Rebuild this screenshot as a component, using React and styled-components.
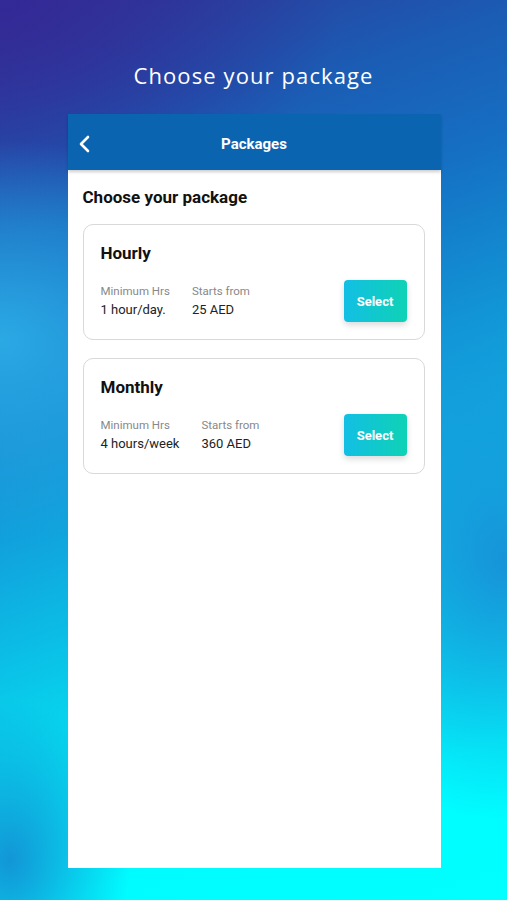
import React from "react";
import styled, {createGlobalStyle} from "styled-components";

const GlobalStyle = createGlobalStyle`
  html, body {
    margin: 0;
    padding: 0;
  }

  body {
    font-family: Roboto, "Liberation Sans", sans-serif;
  }
`;

const packages = [
    {name: "Hourly", minHours: "1 hour/day.", price: "25 AED"},
    {name: "Monthly", minHours: "4 hours/week", price: "360 AED"},
];

export default function App() {
    return <Page>
        <GlobalStyle/>
        <Caption>Choose your package</Caption>
        <Screen>
            <Header>
                <BackButton>
                    <svg width="14" height="18" viewBox="0 0 14 18">
                        <path d="M10 2 L3 9 L10 16" fill="none" stroke="#fff" strokeWidth="2.6"
                              strokeLinecap="round" strokeLinejoin="round"/>
                    </svg>
                </BackButton>
                <HeaderTitle>Packages</HeaderTitle>
            </Header>
            <Body>
                <Heading>Choose your package</Heading>
                {packages.map(item => (
                    <Card key={item.name}>
                        <CardInfo>
                            <CardTitle>{item.name}</CardTitle>
                            <Details>
                                <Detail>
                                    <Label>Minimum Hrs</Label>
                                    <Value>{item.minHours}</Value>
                                </Detail>
                                <Detail>
                                    <Label>Starts from</Label>
                                    <Value>{item.price}</Value>
                                </Detail>
                            </Details>
                        </CardInfo>
                        <SelectButton>Select</SelectButton>
                    </Card>
                ))}
            </Body>
        </Screen>
    </Page>
};

const Page = styled.div`
  width: 507px;
  height: 900px;
  overflow: hidden;
  display: flex;
  flex-direction: column;
  align-items: center;
  background:
    radial-gradient(ellipse 120px 160px at 10px 860px, rgba(20, 140, 210, 0.9), rgba(20, 140, 210, 0) 100%),
    radial-gradient(ellipse 260px 200px at 0px 340px, rgba(45, 175, 232, 0.9), rgba(45, 175, 232, 0) 100%),
    radial-gradient(ellipse 220px 260px at 507px 560px, rgba(25, 140, 215, 0.9), rgba(25, 140, 215, 0) 100%),
    radial-gradient(ellipse 340px 230px at 0px 0px, rgba(52, 40, 150, 0.95), rgba(52, 40, 150, 0) 100%),
    linear-gradient(160deg, #2f3494 0%, #1b5cb4 18%, #1570c4 30%, #10a6de 52%, #06d7ee 70%, #00fcff 85%, #00ffff 100%);
`;

const Caption = styled.div`
  margin-top: 60px;
  height: 30px;
  color: #fff;
  font-family: "Open Sans", Lato, sans-serif;
  font-size: 22px;
  letter-spacing: 1.1px;
  line-height: 30px;
`;

const Screen = styled.div`
  margin-top: 24px;
  width: 373px;
  height: 754px;
  background: #fff;
  display: flex;
  flex-direction: column;
  margin-left: 1px;
`;

const Header = styled.div`
  height: 56px;
  background: #0b64b0;
  display: flex;
  align-items: center;
  justify-content: center;
  position: relative;
  box-shadow: 0 2px 3px rgba(0, 0, 0, 0.2);
`;

const BackButton = styled.div`
  position: absolute;
  left: 10px;
  top: 21px;
  display: flex;
`;

const HeaderTitle = styled.div`
  color: #fff;
  font-size: 15px;
  font-weight: 700;
  margin-top: 4px;
`;

const Body = styled.div`
  padding: 16px 16px 0 15px;
  display: flex;
  flex-direction: column;
  gap: 18px;
`;

const Heading = styled.div`
  font-size: 17px;
  font-weight: 700;
  color: #111;
  margin-bottom: -2px;
  line-height: 22px;
`;

const Card = styled.div`
  height: 116px;
  box-sizing: border-box;
  border: 1px solid #d9d9d9;
  border-radius: 10px;
  display: flex;
  align-items: flex-end;
  justify-content: space-between;
  padding: 0 17px 17px 17px;
`;

const CardInfo = styled.div`
  display: flex;
  flex-direction: column;
  align-self: flex-start;
  padding-top: 17px;
`;

const CardTitle = styled.div`
  font-size: 17px;
  font-weight: 700;
  color: #111;
  line-height: 22px;
  margin-bottom: 20px;
`;

const Details = styled.div`
  display: flex;
  gap: 22px;
`;

const Detail = styled.div`
  display: flex;
  flex-direction: column;
  gap: 3px;
`;

const Label = styled.span`
  font-size: 11.5px;
  color: #888;
  line-height: 14px;
`;

const Value = styled.span`
  font-size: 13px;
  color: #222;
  line-height: 17px;
`;

const SelectButton = styled.div`
  width: 63px;
  height: 42px;
  border-radius: 4px;
  background: linear-gradient(90deg, #12bfe4 0%, #0fd2b5 100%);
  color: #fff;
  font-size: 13px;
  font-weight: 700;
  display: flex;
  align-items: center;
  justify-content: center;
  box-shadow: 0 3px 6px rgba(0, 0, 0, 0.15);
`;
